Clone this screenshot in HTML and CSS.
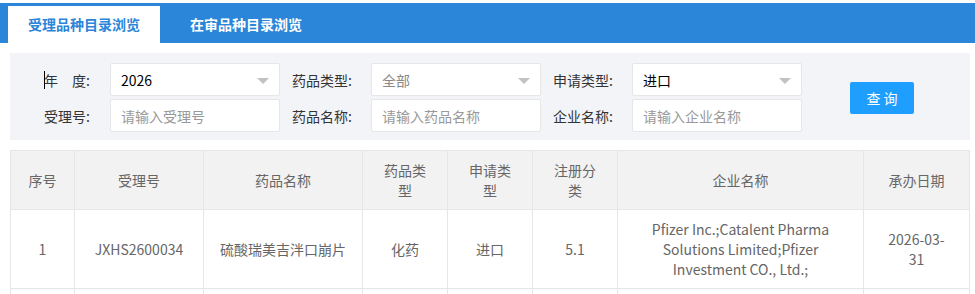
FILE: index.html
```html
<!DOCTYPE html>
<html lang="zh-CN">
  <head>
    <meta charset="UTF-8" />
    <title>受理品种目录浏览</title>
    <link rel="stylesheet" href="styles.css">
  </head>
  <body>
    <div class="tabs">
      <span class="tab active">受理品种目录浏览</span>
      <span class="tab">在审品种目录浏览</span>
    </div>

    <form class="search">
      <div class="fields">
        <label class="lbl"><span class="caret"></span>年&emsp;度:</label>
        <div class="select"><span class="val">2026</span><i class="arrow"></i></div>
        <label class="lbl gap">药品类型:</label>
        <div class="select"><span class="val empty">全部</span><i class="arrow"></i></div>
        <label class="lbl gap">申请类型:</label>
        <div class="select"><span class="val">进口</span><i class="arrow"></i></div>

        <label class="lbl">受理号:</label>
        <input class="input" type="text" placeholder="请输入受理号" />
        <label class="lbl gap">药品名称:</label>
        <input class="input" type="text" placeholder="请输入药品名称" />
        <label class="lbl gap">企业名称:</label>
        <input class="input" type="text" placeholder="请输入企业名称" />
      </div>
      <button type="button" class="btn">查询</button>
    </form>

    <table class="list">
      <colgroup>
        <col style="width: 64px" />
        <col style="width: 129px" />
        <col style="width: 159px" />
        <col style="width: 85px" />
        <col style="width: 85px" />
        <col style="width: 85px" />
        <col style="width: 246px" />
        <col style="width: 106px" />
      </colgroup>
      <thead>
        <tr>
          <th>序号</th>
          <th>受理号</th>
          <th>药品名称</th>
          <th>药品类型</th>
          <th>申请类型</th>
          <th>注册分类</th>
          <th>企业名称</th>
          <th class="date">承办日期</th>
        </tr>
      </thead>
      <tbody>
        <tr>
          <td>1</td>
          <td>JXHS2600034</td>
          <td>硫酸瑞美吉泮口崩片</td>
          <td>化药</td>
          <td>进口</td>
          <td>5.1</td>
          <td>Pfizer Inc.;Catalent Pharma Solutions Limited;Pfizer Investment CO., Ltd.;</td>
          <td class="date">2026-03-31</td>
        </tr>
        <tr>
          <td></td>
          <td></td>
          <td></td>
          <td></td>
          <td></td>
          <td></td>
          <td></td>
          <td class="date"></td>
        </tr>
      </tbody>
    </table>
  </body>
</html>
```

FILE: styles.css
```css
body {
  margin: 0;
  background: #fff;
  font-family: "Noto Sans CJK SC", "Noto Sans", sans-serif;
  font-size: 14px;
  color: #333;
}

/* tabs */
.tabs {
  display: flex;
  margin-top: 3px;
  height: 40px;
  padding: 3px 0 0 8px;
  box-sizing: border-box;
  background: #2b85d8;
}
.tab {
  padding: 0 20px;
  line-height: 37px;
  font-weight: bold;
  color: #fff;
}
.tab + .tab {
  margin-left: 10px;
}
.tab.active {
  background: #fff;
  color: #2b85d8;
}

/* search form */
.search {
  display: flex;
  align-items: center;
  margin: 10px 5px 0 10px;
  padding: 10px 0 8px 34px;
  background: #f3f4f8;
}
.fields {
  display: grid;
  grid-template-columns: 66px 170px 91px 170px 91px 170px;
  grid-auto-rows: 33px;
  row-gap: 3px;
}
.lbl {
  display: flex;
  align-items: center;
  color: #333;
}
.lbl.gap {
  padding-left: 12px;
}
.caret {
  width: 1px;
  height: 18px;
  margin-right: -1px;
  background: #000;
}
.select,
.input {
  position: relative;
  box-sizing: border-box;
  height: 33px;
  border: 1px solid #e6e6e6;
  border-radius: 2px;
  background: #fff;
}
.select {
  display: flex;
  align-items: center;
  padding-left: 10px;
}
.val {
  color: #000;
}
.val.empty {
  color: #888;
}
.arrow {
  position: absolute;
  right: 10px;
  top: 14px;
  border: 6px solid transparent;
  border-top-color: #c2c2c2;
  border-bottom: 0;
}
.input {
  width: 170px;
  padding: 0 10px;
  font: inherit;
  color: #333;
  outline: 0;
}
.input::placeholder {
  color: #999;
}
.btn {
  width: 64px;
  height: 32px;
  margin-left: 48px;
  padding: 0 0 0 3px;
  border: 0;
  border-radius: 2px;
  background: #1e9fff;
  color: #fff;
  font: inherit;
  letter-spacing: 3px;
}

/* result table */
.list {
  margin: 10px 0 0 10px;
  width: 960px;
  table-layout: fixed;
  border-collapse: collapse;
  color: #666;
}
.list th,
.list td {
  padding: 9px 15px;
  line-height: 20px;
  border: 1px solid #e6e6e6;
  text-align: center;
  font-weight: normal;
}
.list th {
  background: #f2f2f2;
}
.list td {
  height: 60px;
}
.list .date {
  padding: 9px 20px;
}
```
